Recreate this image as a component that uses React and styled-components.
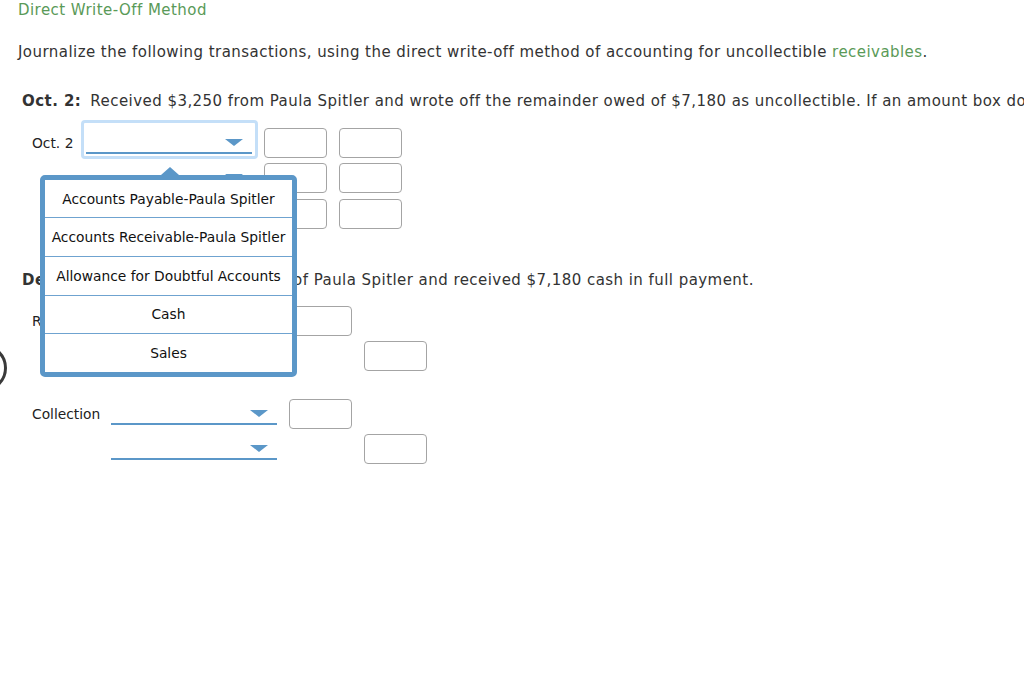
import React from "react";
import styled, { createGlobalStyle, css } from "styled-components";

const GREEN = "#5a9a58";
const BLUE = "#5b97c8";

const GlobalStyle = createGlobalStyle`
  html, body {
    margin: 0;
    padding: 0;
    background: #fff;
  }
  body {
    overflow: hidden;
    font-family: "DejaVu Sans", Verdana, sans-serif;
    color: #333;
  }
`;

const Page = styled.div`
  position: relative;
  width: 1024px;
  height: 674px;
  overflow: hidden;
  padding-left: 18px;
  box-sizing: border-box;
`;

const Title = styled.h2`
  margin: 0;
  font-size: 15px;
  font-weight: normal;
  line-height: 20px;
  letter-spacing: 0.45px;
  color: ${GREEN};
`;

const Intro = styled.p`
  margin: 22px 0 0;
  font-size: 15px;
  line-height: 20px;
  letter-spacing: 0.45px;

  a {
    color: ${GREEN};
    text-decoration: none;
  }
`;

const Transaction = styled.p`
  margin: ${(p) => p.$top}px 0 0 4px;
  font-size: 15px;
  line-height: 20px;
  letter-spacing: 0.45px;
  white-space: nowrap;

  b {
    margin-right: 9px;
  }
`;

const Journal = styled.div`
  margin: ${(p) => p.$top}px 0 0 14px;
  font-family: "DejaVu Sans", "Lucida Grande", sans-serif;
  font-size: 13.8px;
  color: #222;
`;

const Group = styled.div`
  & + & {
    margin-top: 22px;
  }
`;

const Row = styled.div`
  display: flex;
  align-items: center;
  height: 35.5px;
`;

const Label = styled.div`
  flex: none;
  width: ${(p) => p.$w}px;
`;

const SelectCell = styled.div`
  flex: none;
  position: relative;
  width: 166px;
  margin: 0 12px 0 5px;
`;

const Select = styled.div`
  position: relative;
  height: 22px;
  box-sizing: border-box;
  border-bottom: 2px solid ${BLUE};

  svg {
    position: absolute;
    right: 9px;
    top: 7px;
  }

  ${(p) =>
    p.$focused &&
    css`
      &::before {
        content: "";
        position: absolute;
        top: -12px;
        bottom: -7px;
        left: -5px;
        right: -6px;
        border: 3px solid #c4dff8;
        border-radius: 4px;
      }
    `}
`;

const AmountBox = styled.div`
  flex: none;
  width: 63px;
  height: 30px;
  box-sizing: border-box;
  border: 1.5px solid #a4a4a4;
  border-radius: 4px;
  background: #fff;
  visibility: ${(p) => (p.$empty ? "hidden" : "visible")};

  & + & {
    margin-left: 12px;
  }
`;

const Popover = styled.div`
  position: absolute;
  top: 43px;
  left: -46px;
  z-index: 10;
  width: 257px;
  box-sizing: border-box;
  border: 5px solid ${BLUE};
  border-radius: 5px;
  background: #fff;

  &::before {
    content: "";
    position: absolute;
    top: -13px;
    left: 116px;
    border-left: 9px solid transparent;
    border-right: 9px solid transparent;
    border-bottom: 8px solid ${BLUE};
  }
`;

const Option = styled.div`
  display: flex;
  align-items: center;
  justify-content: center;
  height: 37.6px;
  white-space: nowrap;
  color: #111;

  & + & {
    border-top: 1px solid #6fa3d0;
  }
`;

const EdgeButton = styled.div`
  position: absolute;
  left: -41px;
  top: 344px;
  width: 48px;
  height: 48px;
  box-sizing: border-box;
  border: 3px solid #3a3a3a;
  border-radius: 50%;
`;

const Arrow = () => (
  <svg width="18" height="7" viewBox="0 0 18 7">
    <polygon points="0,0 18,0 9,7" fill={BLUE} />
  </svg>
);

const accounts = [
  "Accounts Payable-Paula Spitler",
  "Accounts Receivable-Paula Spitler",
  "Allowance for Doubtful Accounts",
  "Cash",
  "Sales",
];

const EntryRow = ({ label, labelWidth, debit, credit, focused, open }) => (
  <Row>
    <Label $w={labelWidth}>{label}</Label>
    <SelectCell>
      <Select $focused={focused}>
        <Arrow />
      </Select>
      {open && (
        <Popover>
          {accounts.map((a) => (
            <Option key={a}>{a}</Option>
          ))}
        </Popover>
      )}
    </SelectCell>
    <AmountBox $empty={!debit} />
    <AmountBox $empty={!credit} />
  </Row>
);

export default function App() {
  return (
    <Page>
      <GlobalStyle />
      <Title>Direct Write-Off Method</Title>
      <Intro>
        Journalize the following transactions, using the direct write-off method of accounting for
        uncollectible <a href="#r">receivables</a>.
      </Intro>

      <Transaction $top={29}>
        <b>Oct. 2:</b>Received $3,250 from Paula Spitler and wrote off the remainder owed of $7,180 as
        uncollectible. If an amount box does not require an entry, leave it blank.
      </Transaction>
      <Journal $top={14}>
        <Group>
          <EntryRow label="Oct. 2" labelWidth={49} debit credit focused open />
          <EntryRow labelWidth={49} debit credit />
          <EntryRow labelWidth={49} debit credit />
        </Group>
      </Journal>

      <Transaction $top={38.5}>
        <b>Dec. 13:</b>Reinstated the account of Paula Spitler and received $7,180 cash in full payment.
      </Transaction>
      <Journal $top={13}>
        <Group>
          <EntryRow label="Reinstatement" labelWidth={74} debit />
          <EntryRow labelWidth={74} credit />
        </Group>
        <Group>
          <EntryRow label="Collection" labelWidth={74} debit />
          <EntryRow labelWidth={74} credit />
        </Group>
      </Journal>

      <EdgeButton />
    </Page>
  );
}
